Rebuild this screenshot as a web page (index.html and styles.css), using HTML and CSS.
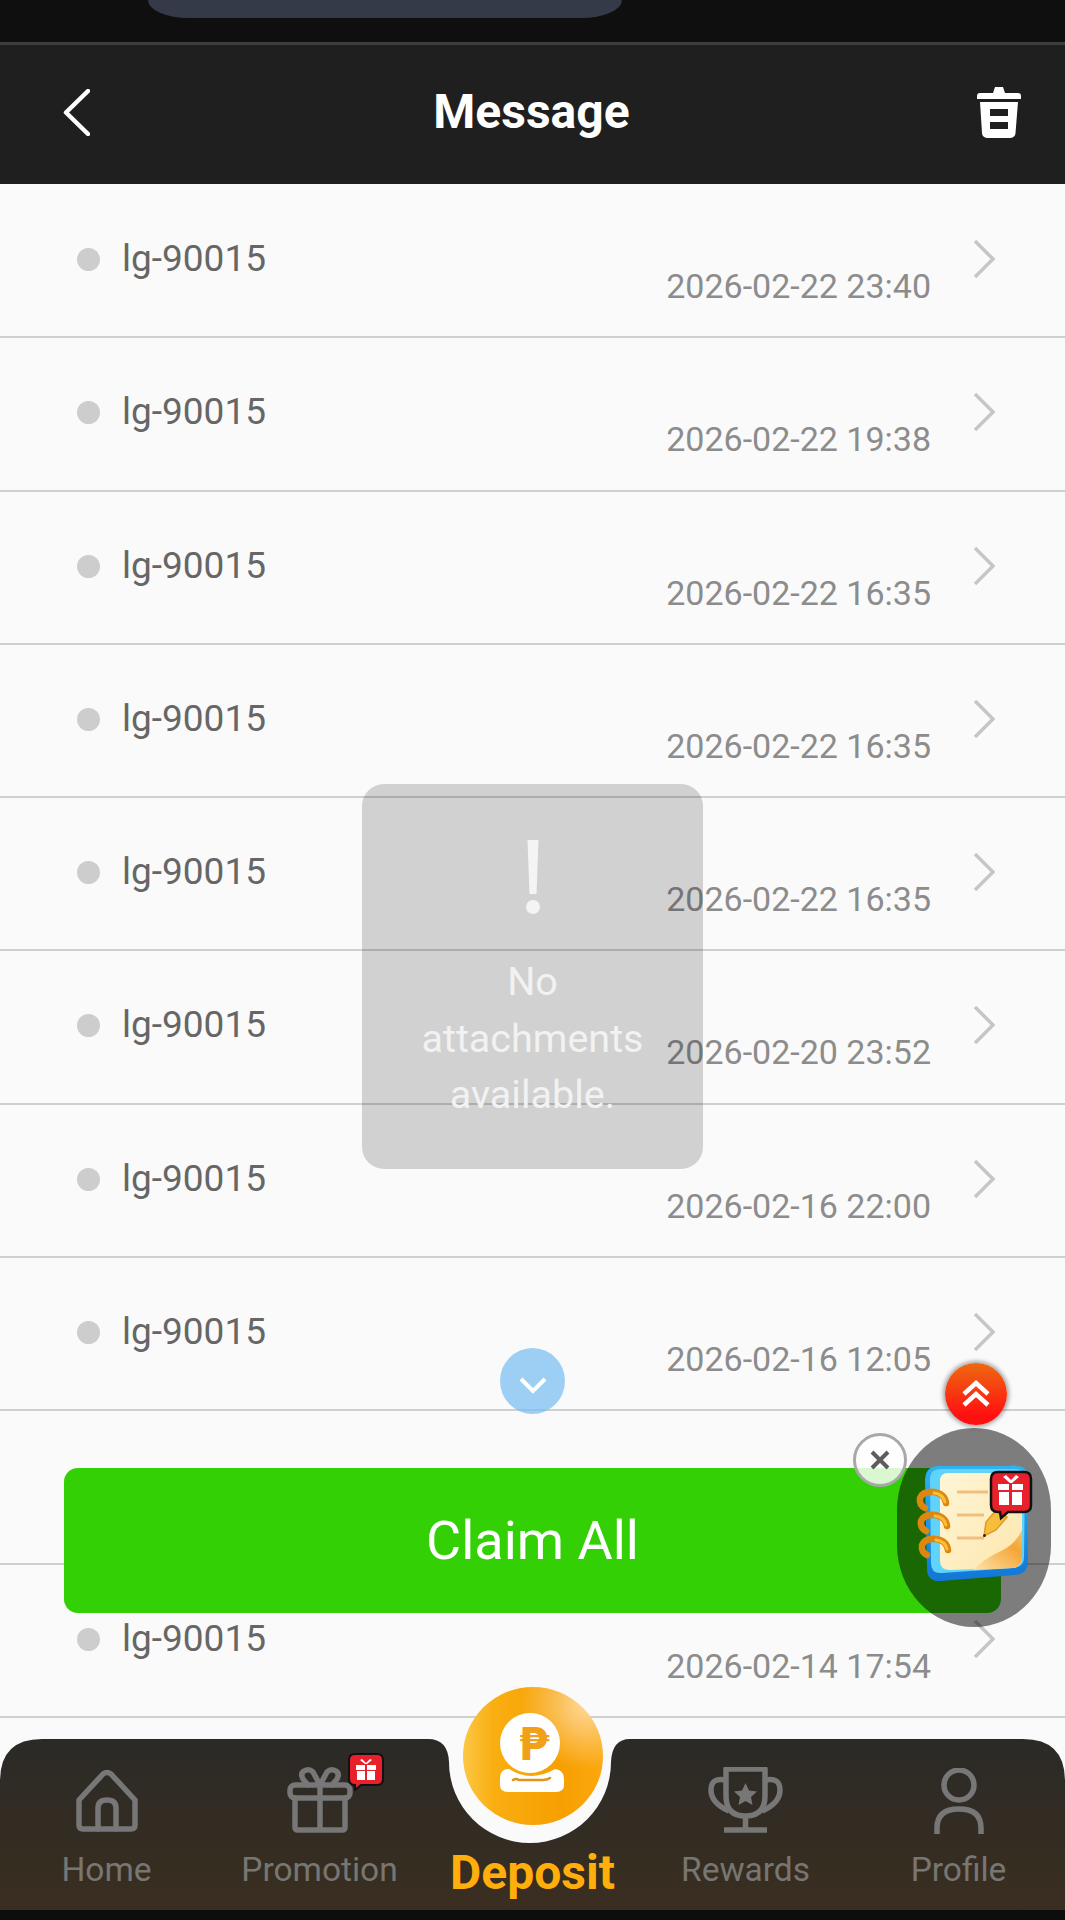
FILE: index.html
```html
<!DOCTYPE html>
<html lang="en">
<head>
<meta charset="utf-8">
<title>Message</title>
<link rel="stylesheet" href="styles.css">
</head>
<body>
<div class="page">
  <div class="status"><div class="notch"></div></div>
  <header class="head">
    <svg class="back" viewBox="0 0 27 47"><path d="M25 2 3 23.500 25 45" /></svg>
    <h1 class="title">Message</h1>
    <svg class="trash" viewBox="0 0 44 52"><path d="M16 7 18 1h8l2 6h13a3 3 0 0 1 3 3v3H0v-3a3 3 0 0 1 3-3Z"/><path fill-rule="evenodd" d="M3 16h38l-2.500 31a5 5 0 0 1-5 5h-23.500a5 5 0 0 1-5-5ZM13 23v7h18v-7ZM13 36v7h18v-7Z"/></svg>
  </header>
  <main class="list">
    <div class="row"><span class="dot"></span><span class="label">lg-90015</span><span class="date">2026-02-22 23:40</span><svg class="chev" viewBox="0 0 22 38"><path d="M2 1 20 19 2 37"/></svg></div>
    <div class="row"><span class="dot"></span><span class="label">lg-90015</span><span class="date">2026-02-22 19:38</span><svg class="chev" viewBox="0 0 22 38"><path d="M2 1 20 19 2 37"/></svg></div>
    <div class="row"><span class="dot"></span><span class="label">lg-90015</span><span class="date">2026-02-22 16:35</span><svg class="chev" viewBox="0 0 22 38"><path d="M2 1 20 19 2 37"/></svg></div>
    <div class="row"><span class="dot"></span><span class="label">lg-90015</span><span class="date">2026-02-22 16:35</span><svg class="chev" viewBox="0 0 22 38"><path d="M2 1 20 19 2 37"/></svg></div>
    <div class="row"><span class="dot"></span><span class="label">lg-90015</span><span class="date">2026-02-22 16:35</span><svg class="chev" viewBox="0 0 22 38"><path d="M2 1 20 19 2 37"/></svg></div>
    <div class="row"><span class="dot"></span><span class="label">lg-90015</span><span class="date">2026-02-20 23:52</span><svg class="chev" viewBox="0 0 22 38"><path d="M2 1 20 19 2 37"/></svg></div>
    <div class="row"><span class="dot"></span><span class="label">lg-90015</span><span class="date">2026-02-16 22:00</span><svg class="chev" viewBox="0 0 22 38"><path d="M2 1 20 19 2 37"/></svg></div>
    <div class="row"><span class="dot"></span><span class="label">lg-90015</span><span class="date">2026-02-16 12:05</span><svg class="chev" viewBox="0 0 22 38"><path d="M2 1 20 19 2 37"/></svg></div>
    <div class="row"><span class="dot"></span><span class="label">lg-90015</span><span class="date">2026-02-15 18:20</span><svg class="chev" viewBox="0 0 22 38"><path d="M2 1 20 19 2 37"/></svg></div>
    <div class="row"><span class="dot"></span><span class="label">lg-90015</span><span class="date">2026-02-14 17:54</span><svg class="chev" viewBox="0 0 22 38"><path d="M2 1 20 19 2 37"/></svg></div>
  </main>
  <nav class="nav">
    <svg class="nav-shape" viewBox="0 0 1065 171" preserveAspectRatio="none">
      <defs><linearGradient id="navg" x1="0" y1="0" x2="0" y2="1"><stop offset="0" stop-color="#2b2a27"/><stop offset="1" stop-color="#3a2e20"/></linearGradient></defs>
      <path fill="url(#navg)" d="M0 171V42Q0 0 42 0H428Q448 0 449 23A81 81 0 0 0 611 23Q612 0 630 0H1023Q1065 0 1065 42V171Z"/>
    </svg>
    <a class="tab">
      <svg class="tab-icon icon-home" viewBox="0 0 62 63"><path d="M3 31 27 5q4-3 8 0l24 26v25q0 4-4 4H7q-4 0-4-4Z"/><path d="M22 60V39q0-8 9-8t9 8v21"/></svg>
      <span class="tab-text">Home</span>
    </a>
    <a class="tab">
      <span class="tab-art">
        <svg class="tab-icon icon-gift" viewBox="0 0 66 67"><rect x="3" y="19" width="60" height="13" rx="5"/><path d="M8 32v29q0 3 3 3h44q3 0 3-3V32M33 19v45"/><path d="M33 19 26 6q-4-4-9-1-4 3-1 8l5 6M33 19 40 6q4-4 9-1 4 3 1 8l-5 6"/></svg>
        <svg class="badge" viewBox="0 0 36 38">
          <path fill="#e8202c" stroke="#111" stroke-width="2" d="M7 1h22q6 0 6 6v19q0 6-6 6H13l-6 5v-5q-6 0-6-6V7q0-6 6-6Z"/>
          <path fill="#fff" d="M8 12h9v5H8ZM19 12h9v5h-9ZM9 18h8v9H9ZM19 18h8v9h-8ZM17 11l-5-4 2-1 4 4 4-4 2 1-5 4Z"/>
        </svg>
      </span>
      <span class="tab-text">Promotion</span>
    </a>
    <a class="tab tab-deposit"><span class="tab-text">Deposit</span></a>
    <a class="tab">
      <svg class="tab-icon icon-cup" viewBox="0 0 75 66"><path d="M18 2h39v27q0 20-19.500 20T18 29Z"/><path d="M18 13Q3 10 3 23q0 13 18 21M57 13q15-3 15 10 0 13-18 21M37.500 49v13M16 63h43"/><path class="cup-star" d="m37.500 16 3.500 7.500 8 1-6 5.500 1.500 8-7-4-7 4 1.500-8-6-5.500 8-1Z"/></svg>
      <span class="tab-text">Rewards</span>
    </a>
    <a class="tab">
      <svg class="tab-icon icon-user" viewBox="0 0 50 66"><circle cx="25" cy="17" r="15"/><path d="M3 66V60Q3 41 25 41t22 19v6"/></svg>
      <span class="tab-text">Profile</span>
    </a>
  </nav>
  <div class="homebar"></div>

  <div class="deposit-ball">
    <svg class="deposit-icon" viewBox="0 0 66 80">
      <circle cx="30" cy="30" r="30" fill="#fff"/>
      <text x="34" y="47" text-anchor="middle" class="peso">₱</text>
      <path fill="#fff" d="M9 56Q20 63 31 63 43 63 55 56 64 57 64 66v6q0 7-8 7H8q-8 0-8-7v-7q0-9 9-9Z"/>
      <path fill="none" stroke="#e0951a" stroke-width="2.500" stroke-linecap="round" d="M13 67q3-2 6 0h24q4 0 7-2"/>
    </svg>
  </div>

  <div class="toast">
    <svg class="toast-mark" viewBox="0 0 16 74"><path d="M2.500 0h11l-2 54h-7Z"/><circle cx="8" cy="67" r="7"/></svg>
    <p class="toast-text">No<br>attachments<br>available.</p>
  </div>

  <button class="scroll-down"><svg viewBox="0 0 30 20"><path d="M3 4 15 16 27 4"/></svg></button>
  <button class="claim">Claim All</button>

  <div class="promo-oval"></div>
  <svg class="notebook" viewBox="0 0 116 118">
    <defs>
      <linearGradient id="nbb" x1="0" y1="0" x2="0" y2="1"><stop offset="0" stop-color="#2fb2f2"/><stop offset="1" stop-color="#1276d6"/></linearGradient>
      <linearGradient id="nbp" x1="0" y1="0" x2="1" y2="1"><stop offset="0" stop-color="#fff6d6"/><stop offset="1" stop-color="#fde6ae"/></linearGradient>
      <linearGradient id="nbf" x1="0" y1="1" x2="1" y2="0"><stop offset="0" stop-color="#fde3ac"/><stop offset=".7" stop-color="#f6a536"/><stop offset="1" stop-color="#f9c26a"/></linearGradient>
    </defs>
    <path fill="#f0653a" d="M94 0q12 0 17 12l-14-4Z"/>
    <path fill="url(#nbb)" d="M22 1h77q12 0 12 13v82q0 13-13 14l-74 6q-14 1-14-12L8 16Q8 1 22 1Z"/>
    <path fill="#60d3fb" d="M24 4h74q10 0 10 10l-1 78q0 10-10 11l-72 5q-11 1-11-10L13 14Q13 4 24 4Z"/>
    <path fill="url(#nbp)" d="M31 8h64q10 0 10 10v75q0 9-10 10l-62 2q-10 0-10-9V16q0-8 8-8Z"/>
    <path fill="url(#nbf)" d="M105 65Q98 80 84 86 70 92 56 105l39-2q10-1 10-10Z"/>
    <path stroke="#f0bf80" stroke-width="3" fill="none" d="M40 27h31M40 50h27M40 73h27"/>
    <path fill="#f6be3c" stroke="#e39a22" stroke-width="1.500" d="M67 71 69 57 80 44 90 52 79 65Z"/>
    <circle cx="67.500" cy="70.500" r="1.500" fill="#3a2a10"/>
    <g fill="none" stroke-linecap="round">
      <path stroke="#dd8610" stroke-width="6.500" d="M29 38Q28 29 17 27 6 26 3 33 2 40 8 43"/>
      <path stroke="#fbbe38" stroke-width="3" d="M28 37Q26 29 17 28"/>
      <path stroke="#dd8610" stroke-width="6.500" d="M30 61Q29 52 18 50 7 49 4 56 3 63 9 66"/>
      <path stroke="#fbbe38" stroke-width="3" d="M29 60Q27 52 18 51"/>
      <path stroke="#dd8610" stroke-width="6.500" d="M31 85Q30 76 19 74 8 73 5 80 4 87 10 90"/>
      <path stroke="#fbbe38" stroke-width="3" d="M30 84Q28 76 19 75"/>
    </g>
    <path fill="#e8202c" stroke="#111" stroke-width="2.500" d="M81 7h26q7 0 7 7v26q0 7-7 7H91l-7 6-1-6h-2q-7 0-7-7V14q0-7 7-7Z"/>
    <path fill="#fff" d="M81 19h11v6H81ZM95 19h11v6H95ZM82 27h10v13H82ZM95 27h10v13H95ZM93 18l-7-6 3-2 5 5 5-5 3 2-7 6Z"/>
  </svg>
  <button class="promo-close"><svg viewBox="0 0 22 22"><path d="M3 3 19 19M19 3 3 19"/></svg></button>
  <button class="promo-up"><svg viewBox="0 0 30 28"><path d="M3 14 15 3 27 14M3 25 15 14 27 25"/></svg></button>
</div>
</body>
</html>
```
FILE: styles.css
```css
* { box-sizing: border-box; }
html, body { margin: 0; padding: 0; background: #0d0d0d; }
.page {
  position: relative;
  width: 1065px;
  height: 1920px;
  display: flex;
  flex-direction: column;
  overflow: hidden;
  font-family: Roboto, "Liberation Sans", sans-serif;
  background: #fafafa;
}
.status {
  height: 45px;
  flex: none;
  padding-left: 148px;
  background: #0f0f0f;
  border-bottom: 3px solid #3d3d3d;
}
.notch {
  width: 474px;
  height: 18px;
  background: #353a48;
  border-radius: 0 0 50px 50px / 0 0 22px 22px;
}
.head {
  height: 139px;
  flex: none;
  display: flex;
  align-items: center;
  justify-content: space-between;
  padding: 0 44px 5px 63px;
  background: #1f1f1f;
  position: relative;
}
.back { width: 27px; height: 47px; fill: none; stroke: #fff; stroke-width: 4.500; stroke-linecap: round; stroke-linejoin: round; }
.title {
  flex: 1;
  margin: 0;
  color: #fff;
  font-size: 48px;
  font-weight: 700;
  line-height: 1;
  text-align: center;
  padding-right: 4px;
}
.trash { width: 44px; height: 52px; fill: #fff; }
.list { flex: 1; min-height: 0; overflow: hidden; padding-top: 1px; background: #fafafa; }
.row {
  height: 153.300px;
  display: flex;
  align-items: flex-start;
  padding: 0 70px 0 77px;
  border-bottom: 2px solid #cfcfcf;
}
.dot { width: 23px; height: 23px; margin-top: 63px; flex: none; border-radius: 50%; background: #cdcdcd; }
.label { margin: 54px 0 0 22px; color: #666; font-size: 37px; line-height: 40px; }
.date { margin: 81px 0 0 auto; color: #8c8c8c; font-size: 34px; line-height: 40px; }
.chev { width: 22px; height: 38px; margin: 55px 0 0 42px; flex: none; fill: none; stroke: #c6c6c6; stroke-width: 3.500; }
.nav {
  position: relative;
  height: 171px;
  flex: none;
  display: grid;
  grid-template-columns: repeat(5, 213px);
  background: #fafafa;
}
.nav-shape { position: absolute; inset: 0; width: 100%; height: 100%; }
.tab { position: relative; display: flex; flex-direction: column; align-items: center; justify-content: flex-end; padding-bottom: 20px; }
.tab-art { position: relative; display: block; }
.tab-text { color: #787672; font-size: 33.500px; line-height: 40px; white-space: nowrap; }
.tab-icon { display: block; margin-bottom: 18px; fill: none; stroke: #777; stroke-width: 5.500; stroke-linecap: round; stroke-linejoin: round; }
.icon-home { width: 62px; height: 63px; }
.icon-gift { width: 66px; height: 67px; margin-bottom: 17px; }
.icon-cup { width: 75px; height: 66px; margin-bottom: 17px; stroke-linecap: butt; }
.icon-user { width: 50px; height: 66px; margin-bottom: 16px; }
.cup-star { fill: #777; stroke: none; }
.badge { position: absolute; left: 61px; top: -13px; width: 36px; height: 38px; }
.tab-deposit .tab-text { color: #ffae0c; font-size: 48px; font-weight: 700; line-height: 50px; }
.tab-deposit { padding-bottom: 12px; }
.homebar { height: 10px; flex: none; background: #0d0d0d; }
.deposit-ball {
  position: absolute;
  left: 463px;
  top: 1687px;
  width: 140px;
  height: 138px;
  display: flex;
  align-items: flex-start;
  justify-content: center;
  padding-top: 26px;
  border-radius: 50%;
  background:
    radial-gradient(circle at 88% 12%, rgba(255, 226, 180, .85) 0%, rgba(255, 226, 180, 0) 38%),
    linear-gradient(90deg, #fcc744 0%, #f9ae12 22%, #f79f00 70%, #fba80e 100%);
}
.deposit-icon { width: 66px; height: 80px; flex: none; }
.peso { fill: #f0a019; font-family: "DejaVu Sans", sans-serif; font-weight: 700; font-size: 44px; }
.toast {
  position: absolute;
  left: 362px;
  top: 784px;
  width: 341px;
  height: 385px;
  padding-top: 56px;
  display: flex;
  flex-direction: column;
  align-items: center;
  background: rgba(0, 0, 0, .16);
  border-radius: 22px;
}
.toast-mark { width: 16px; height: 74px; fill: #f4f4f4; flex: none; }
.toast-text {
  margin: 40px 0 0;
  color: #f2f2f2;
  font-size: 39.500px;
  line-height: 56.500px;
  text-align: center;
}
.scroll-down {
  position: absolute;
  left: 500px;
  top: 1348px;
  width: 65px;
  height: 66px;
  padding: 8px 0 0;
  border: 0;
  border-radius: 50%;
  background: rgba(120, 190, 243, .72);
}
.scroll-down svg { display: block; width: 30px; height: 20px; margin: 0 auto; fill: none; stroke: #fff; stroke-width: 4; }
.claim {
  position: absolute;
  left: 64px;
  top: 1468px;
  width: 937px;
  height: 145px;
  border: 0;
  border-radius: 14px;
  background: #33d006;
  color: #fff;
  font-family: inherit;
  font-size: 54px;
  line-height: 1;
}
.promo-oval {
  position: absolute;
  left: 897px;
  top: 1428px;
  width: 154px;
  height: 199px;
  border-radius: 77px / 82px;
  background: rgba(0, 0, 0, .5);
}
.notebook { position: absolute; left: 917px; top: 1465px; width: 116px; height: 118px; overflow: visible; }
.promo-close {
  position: absolute;
  left: 853px;
  top: 1433px;
  width: 54px;
  height: 54px;
  padding: 0;
  display: flex;
  align-items: center;
  justify-content: center;
  border: 3px solid #a8a8a8;
  border-radius: 50%;
  background: rgba(255, 255, 255, .82);
}
.promo-close svg { width: 22px; height: 22px; fill: none; stroke: #5d5d5d; stroke-width: 4; }
.promo-up {
  position: absolute;
  left: 945px;
  top: 1363px;
  width: 62px;
  height: 62px;
  padding: 0;
  display: flex;
  align-items: center;
  justify-content: center;
  border: 0;
  border-radius: 50%;
  background: linear-gradient(#ee6a10, #ff1010 85%);
  box-shadow: 0 0 4px 2px rgba(0, 0, 0, .35);
}
.promo-up svg { width: 30px; height: 28px; fill: none; stroke: #fff; stroke-width: 4.500; }
```
